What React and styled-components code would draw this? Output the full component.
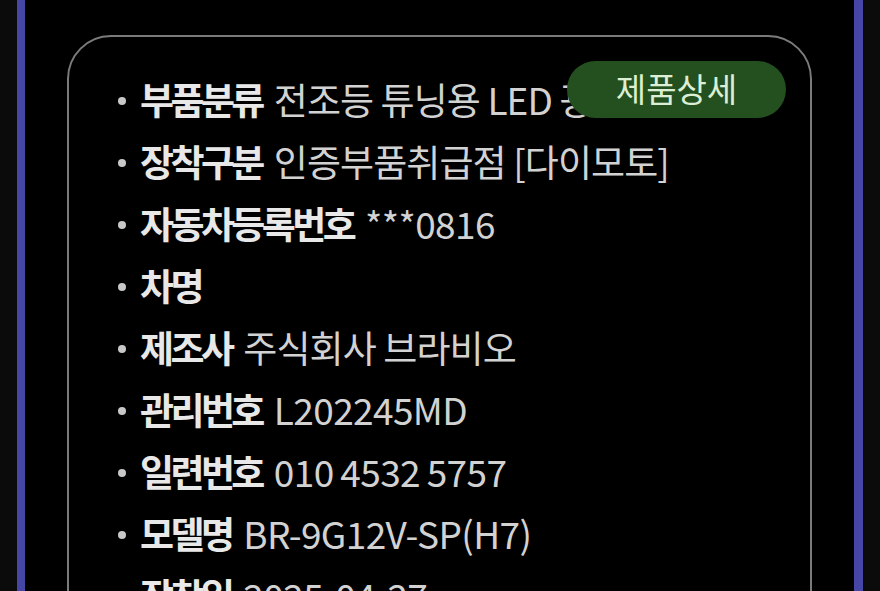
import React from 'react';
import styled, { createGlobalStyle } from 'styled-components';

const GlobalStyle = createGlobalStyle`
body {
	margin: 0;
	background: #0b0b0b;
	overflow: hidden;
	font-family: "Noto Sans CJK KR", "Noto Sans", sans-serif;
}
`;

const Frame = styled.div`
margin-left: 17px;
width: 846px;
height: 591px;
overflow: hidden;
box-sizing: border-box;
background: #000;
border-left: 8px solid #4646a6;
border-right: 9px solid #4646a6;
padding: 35px 42px 0 42px;
`;

const Card = styled.div`
position: relative;
border: 2px solid #7b7b7b;
border-radius: 44px;
padding: 31px 24px 80px 49px;
`;

const DetailButton = styled.button`
position: absolute;
top: 24px;
right: 24px;
width: 219px;
height: 57px;
border: none;
border-radius: 29px;
background: #245020;
color: #dcefd4;
font-family: inherit;
font-size: 33px;
line-height: 1;
padding: 0 0 3px 0;
`;

const List = styled.ul`
list-style: none;
margin: 0;
padding: 0;
`;

const Row = styled.li`
display: flex;
align-items: center;
height: 62px;
font-size: 37px;
line-height: 62px;
white-space: nowrap;
`;

const Dot = styled.span`
width: 8px;
height: 8px;
border-radius: 50%;
background: #c8c8c8;
margin: 4px 14px 0 0;
flex-shrink: 0;
`;

const Label = styled.span`
font-weight: 700;
color: #e8e8e8;
letter-spacing: -3.6px;
margin-right: 12px;
`;

const Value = styled.span`
font-weight: 400;
color: #d2d2d2;
letter-spacing: ${(p) => (p.$latin ? '-0.6px' : '-0.9px')};
word-spacing: ${(p) => (p.$latin ? '-1px' : '0')};
`;

const rows = [
	{ label: '부품분류', value: '전조등 튜닝용 LED 광원' },
	{ label: '장착구분', value: '인증부품취급점 [다이모토]' },
	{ label: '자동차등록번호', value: '***0816', latin: true },
	{ label: '차명', value: '' },
	{ label: '제조사', value: '주식회사 브라비오' },
	{ label: '관리번호', value: 'L202245MD', latin: true },
	{ label: '일련번호', value: '010 4532 5757', latin: true },
	{ label: '모델명', value: 'BR-9G12V-SP(H7)', latin: true },
	{ label: '장착일', value: '2025-04-27', latin: true },
];

const App = () => {
	return (
		<>
			<GlobalStyle />
			<Frame>
				<Card>
					<List>
						{rows.map((row) => (
							<Row key={row.label}>
								<Dot />
								<Label>{row.label}</Label>
								{row.value && <Value $latin={row.latin}>{row.value}</Value>}
							</Row>
						))}
					</List>
					<DetailButton>제품상세</DetailButton>
				</Card>
			</Frame>
		</>
	);
};

export default App;
